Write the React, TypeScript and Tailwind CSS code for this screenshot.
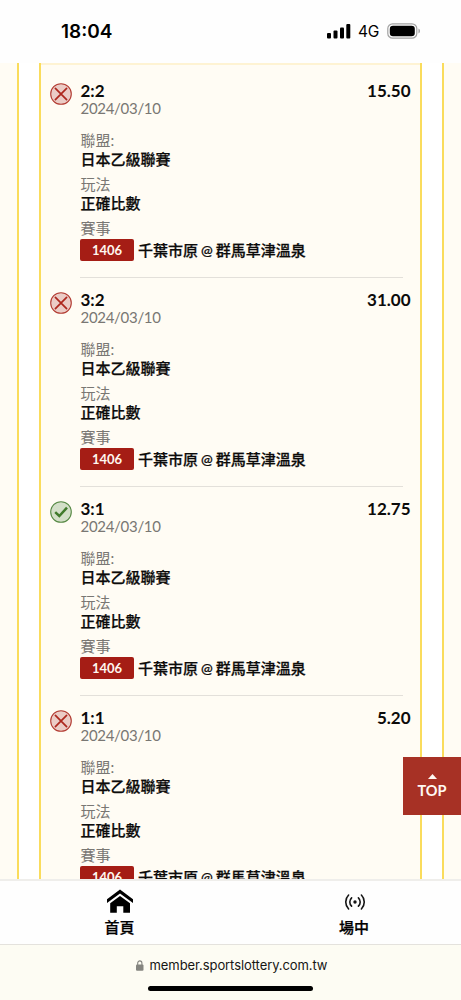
import React from 'react';

type Bet = { score: string; odds: string; won: boolean };

const bets: Bet[] = [
  { score: '2:2', odds: '15.50', won: false },
  { score: '3:2', odds: '31.00', won: false },
  { score: '3:1', odds: '12.75', won: true },
  { score: '1:1', odds: '5.20', won: false },
];

function ResultIcon({ won }: { won: boolean }) {
  return won ? (
    <svg className="size-[22px]" viewBox="0 0 22 22" fill="none">
      <circle cx="11" cy="11" r="10.3" fill="#d3dfc8" stroke="#558843" strokeWidth="1.1" />
      <path d="M5.2 11.2 9.3 15 17 6.6" stroke="#407a2b" strokeWidth="2.5" />
    </svg>
  ) : (
    <svg className="size-[22px]" viewBox="0 0 22 22" fill="none">
      <circle cx="11" cy="11" r="10.3" fill="#ebccc6" stroke="#b23a31" strokeWidth="1.1" />
      <path d="M5.4 5.4 16.6 16.6M16.6 5.4 5.4 16.6" stroke="#ad271d" strokeWidth="1.7" strokeLinecap="round" />
    </svg>
  );
}

function Field({ label, value }: { label: string; value: string }) {
  return (
    <div className="mb-2">
      <div className="h-[18px] leading-[16px] text-[#797773]">{label}</div>
      <div className="h-[18px] font-medium [-webkit-text-stroke:0.25px]">{value}</div>
    </div>
  );
}

function BetItem({ bet }: { bet: Bet }) {
  return (
    <article className="flex h-[209px] shrink-0 pl-[9px] pt-[13px] text-[15px] leading-[18px] text-[#0c0b0a]">
      <div className="w-[30px] shrink-0 pt-[0.5px]">
        <ResultIcon won={bet.won} />
      </div>
      <div className="flex flex-1 flex-col">
        <div className="flex h-[18px] justify-between pl-[0.5px] pr-[9.5px] text-[17px] font-bold">
          <span>{bet.score}</span>
          <span>{bet.odds}</span>
        </div>
        <div className="mb-[14px] h-[18px] pl-[0.5px] text-[15px] leading-[16px] tracking-[-0.3px] text-[#797773]">2024/03/10</div>
        <div className="pl-[0.5px]">
          <Field label="聯盟:" value="日本乙級聯賽" />
          <Field label="玩法" value="正確比數" />
          <div className="h-[18px] leading-[16px] text-[#797773]">賽事</div>
        </div>
        <div className="flex items-center gap-[4px] pt-[0.5px] font-medium">
          <span className="h-[22px] w-[54px] rounded-[2px] bg-[#a51d15] text-center text-[13px] font-bold leading-[22px] text-[#fff7f0]">1406</span>
          <span className="flex gap-[3px] whitespace-nowrap [-webkit-text-stroke:0.25px]">
            <span>千葉市原</span>
            <span className="text-[14px]">@</span>
            <span>群馬草津溫泉</span>
          </span>
        </div>
        <div className="mr-[17px] mt-auto h-px bg-[#e3e0da]" />
      </div>
    </article>
  );
}

function StatusBar() {
  return (
    <header className="flex h-[63px] shrink-0 items-center justify-between bg-[#fefefe] pl-[61px] pr-[40px] font-['Inter',sans-serif]">
      <span className="pt-[2px] text-[19px] font-semibold">18:04</span>
      <div className="flex items-center">
        <svg className="h-[16px] w-[24px]" viewBox="0 0 24 16">
          <rect x="0" y="9" width="4" height="5.5" rx="1" />
          <rect x="6.5" y="6.5" width="4" height="8" rx="1" />
          <rect x="13" y="3.5" width="4" height="11" rx="1" />
          <rect x="19.3" y="0.1" width="4" height="14.4" rx="1" />
        </svg>
        <span className="ml-[7px] w-[29px] pt-px text-[15.5px] tracking-[-0.2px]">4G</span>
        <svg className="-mt-px h-[16px] w-[34px]" viewBox="0 0 34 16" fill="none">
          <rect x="0.8" y="0.8" width="29" height="14.4" rx="4.8" stroke="#a2a2a2" strokeWidth="1.2" />
          <rect x="2.8" y="2.8" width="25" height="10.4" rx="3.2" fill="#000" />
          <path d="M31.5 5.6a2.7 2.7 0 0 1 0 4.8Z" fill="#999" />
        </svg>
      </div>
    </header>
  );
}

export default function App() {
  return (
    <div className="relative flex h-[1000px] w-[461px] flex-col overflow-hidden bg-white font-['Lato','Noto_Sans_CJK_TC',sans-serif] text-black">
      <StatusBar />
      <main className="flex h-[816px] shrink-0 overflow-hidden bg-[#fffcf4]">
        <div className="w-[17px] shrink-0" />
        <div className="flex w-[427px] shrink-0 justify-center border-x-2 border-[#fadc5c] bg-white">
          <section className="flex w-[383px] shrink-0 flex-col border-x-2 border-[#fadc5c] bg-[#fffcf4]">
            <div className="mb-[4px] h-[2px] shrink-0 bg-[#fef3d3]" />
            {bets.map((bet) => (
              <BetItem key={bet.score} bet={bet} />
            ))}
          </section>
        </div>
      </main>
      <nav className="flex h-[66px] shrink-0 border-b border-t-2 border-b-[#e4e2dd] border-t-[#efeeeb] bg-[#fefefe] text-[15px] font-medium leading-[18px]">
        <a className="flex w-[240px] shrink-0 flex-col items-center">
          <svg className="mt-[8px] h-[26px] w-[28px]" viewBox="0 0 28 26">
            <path d="M14 .6 1 10.3v3.6L14 4.6l13 9.3v-3.6Z" />
            <path d="M14 7 4.2 14.2V23.8h6.6v-6.6h6.5v6.6H24v-9.6Z" />
          </svg>
          <span className="mt-[3px] pr-px [-webkit-text-stroke:0.25px]">首頁</span>
        </a>
        <a className="flex w-[229px] shrink-0 flex-col items-center">
          <svg className="mt-[12px] h-[18px] w-[22px]" viewBox="0 0 22 18" fill="none" stroke="#151515" strokeWidth="1.6" strokeLinecap="round">
            <circle cx="11" cy="9" r="1.7" fill="#151515" stroke="none" />
            <path d="M7.6 4.8a5.8 5.8 0 0 0 0 8.4M14.4 4.8a5.8 5.8 0 0 1 0 8.4M4.6 2a10 10 0 0 0 0 14M17.4 2a10 10 0 0 1 0 14" />
          </svg>
          <span className="mt-[7px] pr-px [-webkit-text-stroke:0.25px]">場中</span>
        </a>
      </nav>
      <footer className="flex flex-1 flex-col items-center bg-[#fdfcf3] font-['Inter',sans-serif]">
        <div className="mt-[11px] flex h-[18px] items-center gap-[6px] pl-[2px] text-[13px] leading-[18px] tracking-[-0.08px] text-[#161614]">
          <svg className="h-[11px] w-[8px]" viewBox="0 0 8 11" fill="none">
            <rect y="4.4" width="7.5" height="6.4" rx="1.1" fill="#858580" />
            <path d="M1.7 5V3a2.1 2.1 0 0 1 4.2 0v2" stroke="#858580" strokeWidth="1.1" />
          </svg>
          <span>member.sportslottery.com.tw</span>
        </div>
        <div className="mt-[12px] h-[5px] w-[165px] rounded-full bg-black" />
      </footer>
      <button className="absolute right-0 top-[757px] flex h-[58px] w-[58px] flex-col items-center bg-[#a73125] text-[14.5px] font-bold leading-[18px] text-[#fff8f3]">
        <svg className="mt-[17px] h-[5px] w-[9px]" viewBox="0 0 9 5" fill="currentColor">
          <path d="M4.5 0 9 5H0Z" />
        </svg>
        <span className="mt-[3px]">TOP</span>
      </button>
    </div>
  );
}
